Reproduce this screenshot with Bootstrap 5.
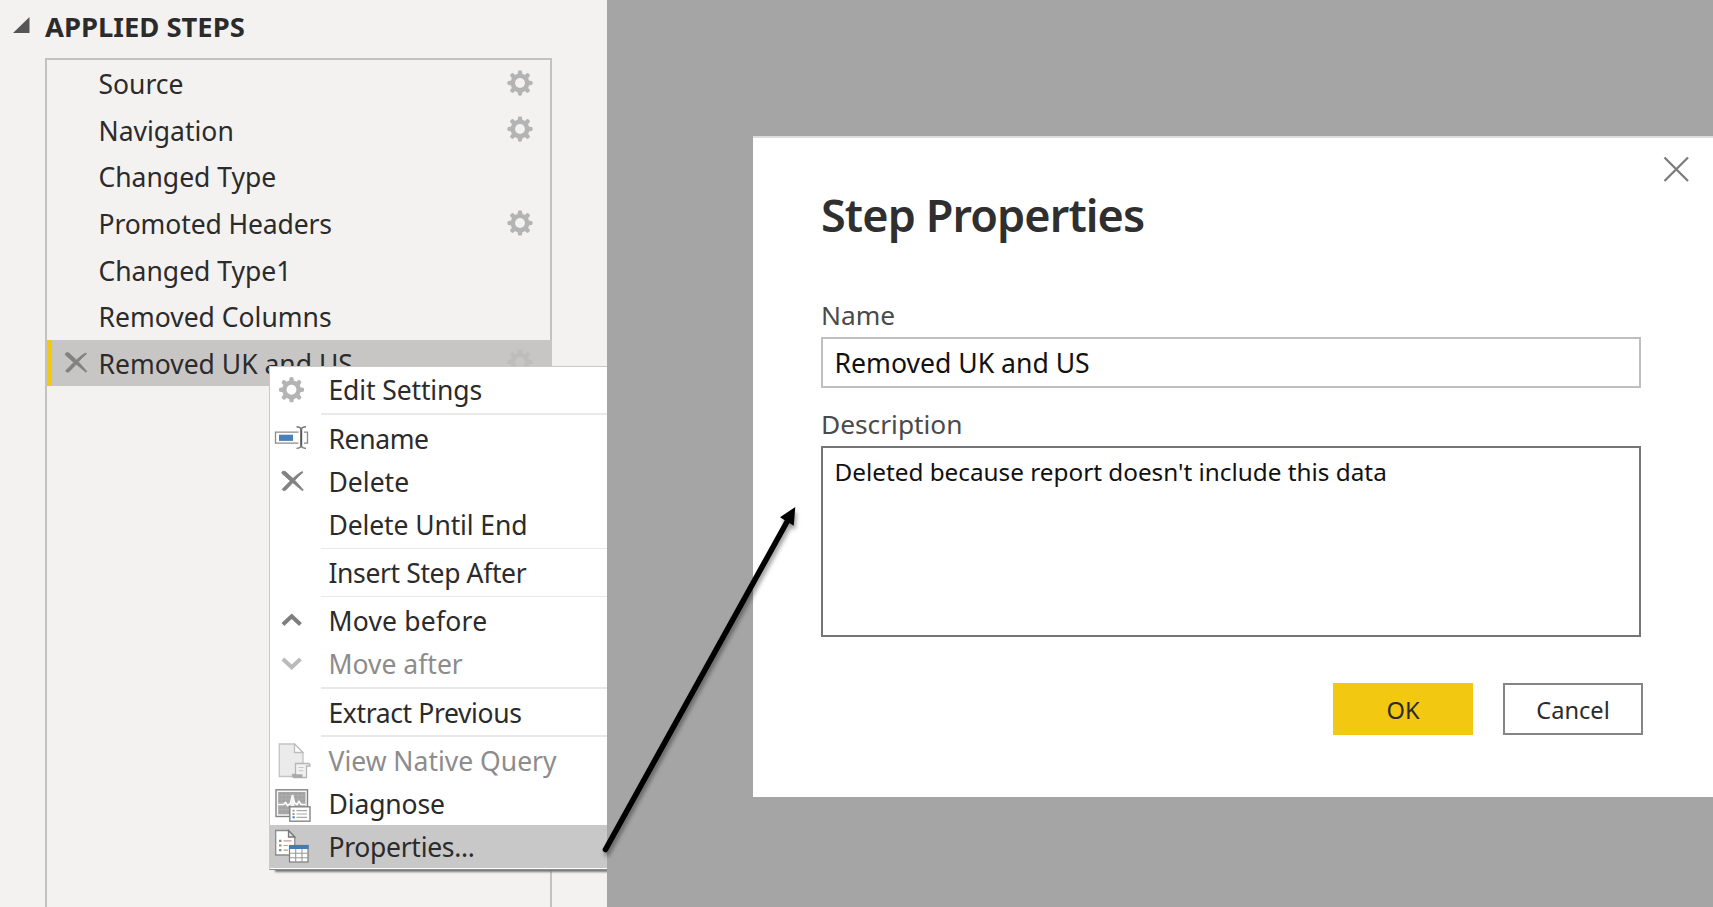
<!DOCTYPE html>
<html lang="en">
<head>
<meta charset="utf-8">
<meta name="viewport" content="width=device-width, initial-scale=1">
<title>Step Properties</title>
<link href="https://cdn.jsdelivr.net/npm/bootstrap@5.3.0/dist/css/bootstrap.min.css" rel="stylesheet">
<style>
  body { font-family: "Noto Sans", "Open Sans", sans-serif; font-size: 26.5px; color: #2b2b2b; background: #a5a5a5; }
  .workspace { height: 907px; }

  /* query settings pane */
  .pane { width: 607px; background: #f3f2f1; padding: 0 55px 0 45px; }
  .pane-title { height: 58px; line-height: 53px; font-size: 27.4px; margin-left: -31px; }
  .pane-title svg { width: 17px; height: 16px; margin: 17px 15px 0 -1px; }
  .steps { border: 2px solid #c2c2c2; border-bottom: 0; }
  .step { height: 46.6px; line-height: 46.6px; padding-right: 17.5px; }
  .step .step-name { padding-top: 2.6px; }
  .step .lead-cell { width: 51.5px; padding-left: 16.5px; }
  .step.active { background: #c8c6c4; box-shadow: inset 5px 0 #f2c811, 2px 0 #c8c6c4; }
  .step svg { display: block; }
  .step .gear { width: 26px; height: 26px; margin-top: -1px; }
  .step.active .gear { opacity: .45; }

  /* context menu */
  .step-menu { left: 268.5px; top: 366.3px; width: 345px; background: #fff; border: 1px solid #c9c9c9; border-bottom-color: #8a8a8a; box-shadow: 6px 2px 2px #777; padding: 1px 0 1.5px; }
  .entry { height: 43px; line-height: 45.4px; }
  .entry svg { width: 44px; height: 43px; margin: .4px 15px 0 0; flex: none; }
  .entry.no-icon { padding-left: 59px; }
  .entry.off { color: #8c8c8c; }
  .entry.hot { background: #c8c8c8; }
  .rule { height: 1.4px; margin: 1.9px 0 2.04px 51px; background: #e9e9e9; }

  /* letter fitting */
  .fit-p { letter-spacing: .2px; }
  .fit-s { letter-spacing: -.12px; }
  .fit-m { letter-spacing: -.3px; }
  .fit-mm { letter-spacing: -.38px; }

  /* dialog */
  .dialog { margin: 136px 0 0 146px; height: 661px; background: #fff; border-top: 2px solid #dcdcdc; padding: 0 72px 0 68px; }
  .dialog-close { width: 27px; height: 27px; right: 23.5px; top: 17.5px; }
  .dialog h1 { font-size: 45px; font-weight: 600; letter-spacing: -.9px; line-height: 60px; margin: 47px 0 0; color: #2f2f2f; }
  .dialog label { display: block; line-height: 36px; font-size: 26.3px; color: #4a4a4a; }
  .name-label { margin: 52px 0 4px; }
  .desc-label { margin: 18px 0 4px; }
  .dialog .form-control { border-radius: 0; font-size: 26.6px; color: #111; padding: 0 11.5px; box-shadow: none; resize: none; }
  .name-box { height: 51px; border: 2px solid #bfbfbf; }
  .desc-box { height: 191px; border: 2px solid #757575; }
  .dialog textarea.form-control { font-size: 24.3px; line-height: 34px; padding-top: 7px; overflow: hidden; }
  .actions { gap: 30px; margin: 46px -2px 0 0; }
  .dialog .btn { width: 140px; height: 52px; border-radius: 0; font-size: 23.6px; padding: 0; color: #2b2b2b; }
  .dialog .btn-ok { background: #f2c811; border: 0; line-height: 54px; }
  .dialog .btn-cancel { background: #fff; border: 2px solid #858585; line-height: 50px; }

  .callout-arrow { left: 590px; top: 495px; }
</style>
</head>
<body>
<svg class="d-none">
  <symbol id="gear" viewBox="-13 -13 26 26">
    <g stroke="#b4b4b4" fill="none" stroke-linecap="round" stroke-width="4.5">
      <circle r="7.2"/>
      <path d="M0-8V-10.5M0 8V10.5M-8 0H-10.5M8 0H10.5M5.700-5.700 7.500-7.500M-5.700-5.700-7.500-7.500M5.700 5.700 7.500 7.500M-5.700 5.700-7.500 7.500"/>
    </g>
  </symbol>
  <symbol id="cross" viewBox="0 0 23 21">
    <path fill="#828282" stroke="#828282" stroke-width=".800" d="M1.2 1.2C2.5.2 4 .6 5 1.6L12 8C15 5.200 18 2.600 21.200 1.100L22 1.800C19 4.300 16.300 7 13.800 9.800L22.300 19.400 21.400 20.200 11.800 12.200C9.300 14.700 7 17.300 4.600 19.700 3.600 20.600 1.800 20.200 1.100 18.800 3.800 16 6.500 13.200 9.300 10.400L1.200 3.200C.7 2.500.7 1.700 1.200 1.200Z"/>
  </symbol>
</svg>

<div class="workspace d-flex position-relative overflow-hidden">

  <section class="pane position-relative overflow-hidden flex-shrink-0 d-flex flex-column">
    <div class="pane-title d-flex align-items-start fw-bold">
      <svg viewBox="0 0 17 16"><path d="M0 16 16.500 0V16Z" fill="#555"/></svg>
      <span class="text-nowrap">APPLIED STEPS</span>
    </div>
    <div class="steps flex-grow-1">
      <div class="step d-flex align-items-center"><span class="lead-cell"></span><span class="step-name me-auto">Source</span><svg class="gear"><use href="#gear"/></svg></div>
      <div class="step d-flex align-items-center"><span class="lead-cell"></span><span class="step-name me-auto">Navigation</span><svg class="gear"><use href="#gear"/></svg></div>
      <div class="step d-flex align-items-center"><span class="lead-cell"></span><span class="step-name">Changed Type</span></div>
      <div class="step d-flex align-items-center"><span class="lead-cell"></span><span class="step-name me-auto fit-s">Promoted Headers</span><svg class="gear"><use href="#gear"/></svg></div>
      <div class="step d-flex align-items-center"><span class="lead-cell"></span><span class="step-name">Changed Type1</span></div>
      <div class="step d-flex align-items-center"><span class="lead-cell"></span><span class="step-name">Removed Columns</span></div>
      <div class="step active d-flex align-items-center"><span class="lead-cell"><svg width="24" height="21"><use href="#cross"/></svg></span><span class="step-name me-auto">Removed UK and US</span><svg class="gear"><use href="#gear"/></svg></div>
    </div>

    <div class="step-menu position-absolute text-nowrap">
      <div class="entry d-flex fit-s"><svg viewBox="0 0 44 43"><use href="#gear" x="8.500" y="7.800" width="26" height="26"/></svg>Edit Settings</div>
      <div class="rule"></div>
      <div class="entry d-flex fit-mm">
        <svg viewBox="0 0 44 43">
          <path d="M28.500 15.200H5.500V26.200H28.500M34 15.200H37.500V26.200H34" fill="none" stroke="#8b8b8b" stroke-width="1.300"/>
          <rect x="9" y="17.700" width="14" height="6.200" fill="#4a80b8"/>
          <path d="M31.200 12V29" stroke="#555" stroke-width="2" fill="none"/>
          <path d="M26.500 9.700C29 9.800 30.500 10.500 31.200 12 31.900 10.500 33.500 9.800 36 9.700M26.500 31.400C29 31.300 30.500 30.500 31.200 29 31.900 30.500 33.500 31.300 36 31.400" stroke="#777" stroke-width="1.400" fill="none"/>
        </svg>Rename</div>
      <div class="entry d-flex"><svg viewBox="0 0 44 43"><use href="#cross" x="11" y="10.500" width="23" height="21"/></svg>Delete</div>
      <div class="entry no-icon fit-s">Delete Until End</div>
      <div class="rule"></div>
      <div class="entry no-icon fit-mm">Insert Step After</div>
      <div class="rule"></div>
      <div class="entry d-flex fit-p"><svg viewBox="0 0 44 43"><path d="M12.900 24.500 21.700 16.300 30.500 24.500" fill="none" stroke="#7e7e7e" stroke-width="4"/></svg>Move before</div>
      <div class="entry off d-flex"><svg viewBox="0 0 44 43"><path d="M12.900 16 21.700 24.200 30.500 16" fill="none" stroke="#bababa" stroke-width="4"/></svg>Move after</div>
      <div class="rule"></div>
      <div class="entry no-icon fit-mm">Extract Previous</div>
      <div class="rule"></div>
      <div class="entry off d-flex">
        <svg viewBox="0 0 44 43">
          <path d="M9.300 5H24.500L33 13.500V37.500H9.300Z" fill="#ebebeb" stroke="#c3c3c3" stroke-width="1.300"/>
          <path d="M24.500 5V13.500H33Z" fill="#fff" stroke="#bdbdbd" stroke-width="1.300"/>
          <path d="M25.500 24.500H38.500Q40 24.500 40 27H36.500V38.500H24Q22.500 38.500 22.500 35.500H25.500Z" fill="#f1f1f1" stroke="#b5b5b5" stroke-width="1.300"/>
          <path d="M22.500 35.300H32.500V38.700H23.500Q22.500 38 22.500 35.300Z" fill="#a9a9a9"/>
          <path d="M28.500 28.500H33.500M28.500 31.700H33.500" stroke="#c4c4c4"/>
        </svg>View Native Query</div>
      <div class="entry d-flex fit-s">
        <svg viewBox="0 0 44 43">
          <rect x="6" y="7.800" width="31.500" height="26.700" fill="#f7f7f7" stroke="#848484" stroke-width="1.400"/>
          <rect x="8.200" y="10" width="27.200" height="22.300" fill="#a2a2a2"/>
          <path d="M12 10V32M16 10V32M20 10V32M24 10V32M28 10V32M32 10V32M8 13.500H35.500M8 17H35.500M8 20.500H35.500M8 24H35.500M8 27.500H35.500" stroke="#b3b3b3" stroke-width=".700"/>
          <path d="M8 22.500H13.500L15.500 20.500 17.500 23.500 20.500 21.500 22.500 13 24.500 21 27 22.500 29 19.500 31 22.500H35.500" fill="none" stroke="#fff" stroke-width="1.700"/>
          <path d="M20.500 22 22.500 13 24.500 22V25H20.500Z" fill="#f4f4f4"/>
          <rect x="19.800" y="24.800" width="20.200" height="14.400" fill="#fff" stroke="#858585" stroke-width="1.400"/>
          <path d="M26.500 28.700H37M26.500 32H37M26.500 35.300H37" stroke="#a8a8a8" stroke-width="1.200"/>
          <path d="M22.500 28.700H24.500M22.500 32H24.500" stroke="#999" stroke-width="1.800"/>
          <path d="M22.500 35.300H24.700" stroke="#4a80b8" stroke-width="2"/>
        </svg>Diagnose</div>
      <div class="entry hot fit-m d-flex">
        <svg viewBox="0 0 44 43">
          <path d="M5.700 5.500H18.500L24.800 12V30H5.700Z" fill="#fff" stroke="#8a8a8a" stroke-width="1.300"/>
          <path d="M18.500 5.500V12H24.800Z" fill="#e2e2e2" stroke="#777" stroke-width="1.300"/>
          <path d="M13.500 15.800H21.500M13.500 20.500H18M13.500 25.200H18" stroke="#c2a08c" stroke-width="1.200"/>
          <path d="M9 15.800H11.500M9 20.500H11.500M9 25.200H11.500" stroke="#8d8d8d" stroke-width="2.200"/>
          <rect x="19.500" y="20.500" width="18.500" height="16.500" fill="#fff" stroke="#7c7c7c" stroke-width="1.200"/>
          <rect x="19" y="20" width="19.600" height="4" fill="#3f7cb8"/>
          <path d="M25.700 24V37M32 24V37M19.500 28.300H38M19.500 32.700H38" stroke="#999" stroke-width="1.100"/>
        </svg>Properties...</div>
    </div>
  </section>

  <section class="dialog position-relative flex-grow-1">
    <svg class="dialog-close position-absolute" viewBox="0 0 27 27"><path d="M1.500 1.500 25 25M25 1.500 1.500 25" stroke="#7a7a7a" stroke-width="2.200" fill="none"/></svg>
    <h1>Step Properties</h1>
    <label for="step-name" class="name-label">Name</label>
    <input id="step-name" class="form-control name-box" value="Removed UK and US">
    <label for="step-desc" class="desc-label">Description</label>
    <textarea id="step-desc" class="form-control desc-box" spellcheck="false">Deleted because report doesn't include this data</textarea>
    <div class="actions d-flex justify-content-end">
      <button class="btn btn-ok">OK</button>
      <button class="btn btn-cancel">Cancel</button>
    </div>
  </section>

  <svg class="callout-arrow position-absolute" width="220" height="370" viewBox="590 495 220 370">
    <defs><filter id="soft" x="-20%" y="-20%" width="140%" height="140%"><feDropShadow dx="1.500" dy="4" stdDeviation="2" flood-opacity=".4"/></filter></defs>
    <g filter="url(#soft)">
      <path d="M605.500 849.500 788 520" stroke="#000" stroke-width="5.600" stroke-linecap="round"/>
      <path d="M795.300 507 780 517.300 793.700 525.800Z"/>
    </g>
  </svg>
</div>
<script src="https://cdn.jsdelivr.net/npm/bootstrap@5.3.0/dist/js/bootstrap.bundle.min.js"></script>
</body>
</html>
